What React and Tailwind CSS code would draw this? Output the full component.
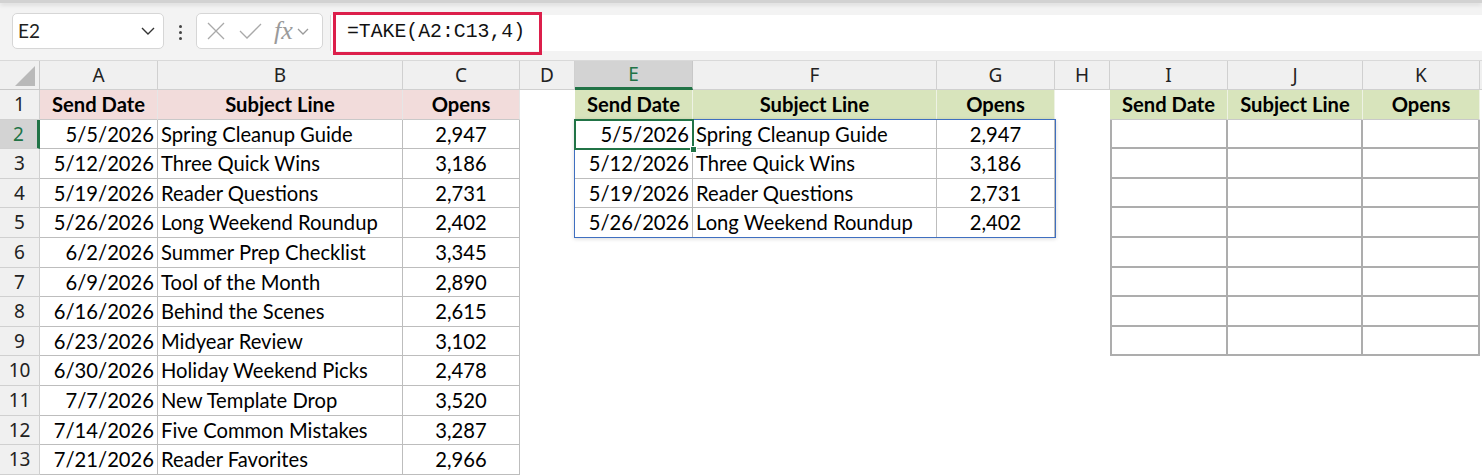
import React from 'react';

const data = [
  ['5/5/2026', 'Spring Cleanup Guide', '2,947'],
  ['5/12/2026', 'Three Quick Wins', '3,186'],
  ['5/19/2026', 'Reader Questions', '2,731'],
  ['5/26/2026', 'Long Weekend Roundup', '2,402'],
  ['6/2/2026', 'Summer Prep Checklist', '3,345'],
  ['6/9/2026', 'Tool of the Month', '2,890'],
  ['6/16/2026', 'Behind the Scenes', '2,615'],
  ['6/23/2026', 'Midyear Review', '3,102'],
  ['6/30/2026', 'Holiday Weekend Picks', '2,478'],
  ['7/7/2026', 'New Template Drop', '3,520'],
  ['7/14/2026', 'Five Common Mistakes', '3,287'],
  ['7/21/2026', 'Reader Favorites', '2,966']
];

const heights = ['h-[30px]', 'h-[29px]', 'h-[30px]', 'h-[29px]', 'h-[30px]', 'h-[30px]', 'h-[29px]', 'h-[30px]', 'h-[29px]', 'h-[30px]', 'h-[30px]', 'h-[29px]', 'h-[30px]'];

const letters = ['A', 'B', 'C', 'D', 'E', 'F', 'G', 'H', 'I', 'J', 'K'];

const gridCols = 'grid grid-cols-[40px_118px_245px_117px_55px_118px_244px_118px_55px_118px_135px_117px_1fr]';

const cell = 'flex items-center overflow-hidden whitespace-nowrap';

const FormulaBar = () => (
  <div className="relative h-[60px] bg-[#f3f3f3]">
    <div className="h-[3px] bg-[#d2d2d2] shadow-[0_2px_4px_rgba(0,0,0,0.12)]" />
    <div className="flex items-start pt-[10px]">
      <div className="ml-[12px] flex h-[36px] w-[152px] items-center justify-between rounded-[5px] border border-[#d6d6d6] bg-white pl-[5px] pr-[8px]">
        <span className="text-[19px] text-[#1f1f1f]">E2</span>
        <svg width="14" height="8" viewBox="0 0 14 8" fill="none" stroke="#333" strokeWidth="1.4">
          <path d="M1 1l6 6 6-6" />
        </svg>
      </div>
      <div className="ml-[15px] mr-[14px] mt-[12px] flex flex-col gap-[3px]">
        <span className="h-[3px] w-[3px] rounded-full bg-[#444]" />
        <span className="h-[3px] w-[3px] rounded-full bg-[#444]" />
        <span className="h-[3px] w-[3px] rounded-full bg-[#444]" />
      </div>
      <div className="flex h-[36px] w-[127px] items-center rounded-[5px] border border-[#d6d6d6] bg-white pl-[9px]">
        <svg width="20" height="20" viewBox="0 0 20 20" fill="none" stroke="#a9a9a9" strokeWidth="1.3">
          <path d="M2 2l16 16M18 2L2 18" />
        </svg>
        <svg className="ml-[13px]" width="23" height="18" viewBox="0 0 23 18" fill="none" stroke="#a9a9a9" strokeWidth="1.3">
          <path d="M1 9l7 7L22 2" />
        </svg>
        <span className="ml-[12px] font-['Liberation_Serif',serif] text-[26px] leading-none italic text-[#9a9a9a]">fx</span>
        <svg className="ml-[4px]" width="12" height="7" viewBox="0 0 12 7" fill="none" stroke="#9a9a9a" strokeWidth="1.3">
          <path d="M1 1l5 5 5-5" />
        </svg>
      </div>
      <div className="ml-[7px] mt-[2px] flex h-[36px] flex-1 items-center border-l border-[#dadada] bg-white">
        <div className="-my-[4px] ml-[2px] flex h-[43px] w-[209px] items-center border-[3px] border-[#dc1f4b] pl-[11px] font-['Liberation_Mono',monospace] text-[19.8px] text-[#111]">
          =TAKE(A2:C13,4)
        </div>
      </div>
    </div>
  </div>
);

const ColumnHeaders = () => (
  <div className={`${gridCols} h-[30px] border-t border-[#d9d9d9] bg-[#f0f0f0] font-['Noto_Sans',sans-serif] text-[19px] text-[#222]`}>
    <div className="relative border-r border-b border-[#c8c8c8]">
      <svg className="absolute left-[15px] top-[5px]" width="20" height="20" viewBox="0 0 20 20">
        <path d="M20 0V20H0Z" fill="#b9b9b9" />
      </svg>
    </div>
    {letters.map((l) => (
      <div
        key={l}
        className={
          l === 'E'
            ? `${cell} justify-center border-r border-b-[3px] border-r-[#c8c8c8] border-b-[#217346] bg-[#d3d3d3] text-[#217346]`
            : `${cell} justify-center border-r border-b border-[#d0d0d0]`
        }
      >
        {l}
      </div>
    ))}
    <div className="border-b border-[#d0d0d0]" />
  </div>
);

const Row = ({ r }) => {
  const h = heights[r - 1];
  const d = r >= 2 ? data[r - 2] : null;
  const head = r === 1;
  const t1 = 'border-r border-b border-[#bdbdbd]';
  const pinkHead = 'bg-[#f2dcdb] font-bold justify-center border-r border-b border-r-[#e6e6e6] border-b-[#c9c9c9]';
  const greenHead = 'bg-[#d8e4bc] font-bold justify-center border-r border-b border-r-[#eef2e4] border-b-[#c9c9c9]';
  const e = r >= 2 && r <= 5 ? data[r - 2] : null;
  const inK = r >= 2 && r <= 9;
  const t3 = 'border-r-2 border-b-2 border-[#adadad]';

  return (
    <div className={`${gridCols} ${h} bg-white text-[20.2px] text-black`}>
      <div
        className={
          r === 2
            ? `${cell} justify-center border-r-[3px] border-b border-r-[#217346] border-b-[#d0d0d0] bg-[#d3d3d3] font-['Noto_Sans',sans-serif] text-[19px] text-[#217346]`
            : `${cell} justify-center border-r border-b border-[#d0d0d0] bg-[#f0f0f0] font-['Noto_Sans',sans-serif] text-[19px] text-[#222]`
        }
      >
        {r}
      </div>
      {head ? (
        <>
          <div className={`${cell} ${pinkHead}`}>Send Date</div>
          <div className={`${cell} ${pinkHead}`}>Subject Line</div>
          <div className={`${cell} ${pinkHead} border-r-[#c9c9c9]`}>Opens</div>
        </>
      ) : (
        <>
          <div className={`${cell} ${t1} justify-end pr-[3px]`}>{d[0]}</div>
          <div className={`${cell} ${t1} pl-[3px]`}>{d[1]}</div>
          <div className={`${cell} ${t1} justify-center`}>{d[2]}</div>
        </>
      )}
      <div />
      {head ? (
        <>
          <div className={`${cell} ${greenHead}`}>Send Date</div>
          <div className={`${cell} ${greenHead}`}>Subject Line</div>
          <div className={`${cell} ${greenHead}`}>Opens</div>
        </>
      ) : e ? (
        <>
          <div className={`${cell} ${t1} justify-end pr-[3px]`}>{e[0]}</div>
          <div className={`${cell} ${t1} pl-[3px]`}>{e[1]}</div>
          <div className={`${cell} ${t1} justify-center`}>{e[2]}</div>
        </>
      ) : (
        <>
          <div />
          <div />
          <div />
        </>
      )}
      <div />
      {head ? (
        <>
          <div className={`${cell} ${greenHead}`}>Send Date</div>
          <div className={`${cell} ${greenHead}`}>Subject Line</div>
          <div className={`${cell} ${greenHead}`}>Opens</div>
        </>
      ) : inK ? (
        <>
          <div className={`${t3} border-l-2`} />
          <div className={t3} />
          <div className={t3} />
        </>
      ) : (
        <>
          <div />
          <div />
          <div />
        </>
      )}
      <div />
    </div>
  );
};

const App = () => (
  <div className="h-[475px] w-[1482px] overflow-hidden bg-white font-['Lato',sans-serif]">
    <FormulaBar />
    <ColumnHeaders />
    <div className="relative">
      {heights.map((_, i) => (
        <Row key={i} r={i + 1} />
      ))}
      {/* spill range outline */}
      <div className="pointer-events-none absolute left-[574px] top-[29px] h-[119px] w-[482px] border-[1.5px] border-[#3f6fc0] shadow-[0_1px_4px_rgba(0,0,0,0.15)]" />
      {/* active cell */}
      <div className="pointer-events-none absolute left-[574px] top-[29px] h-[31px] w-[120px] border-2 border-[#217346]">
        <span className="absolute -bottom-[5px] -right-[5px] h-[7px] w-[7px] border border-white bg-[#217346]" />
      </div>
    </div>
  </div>
);

export default App;
